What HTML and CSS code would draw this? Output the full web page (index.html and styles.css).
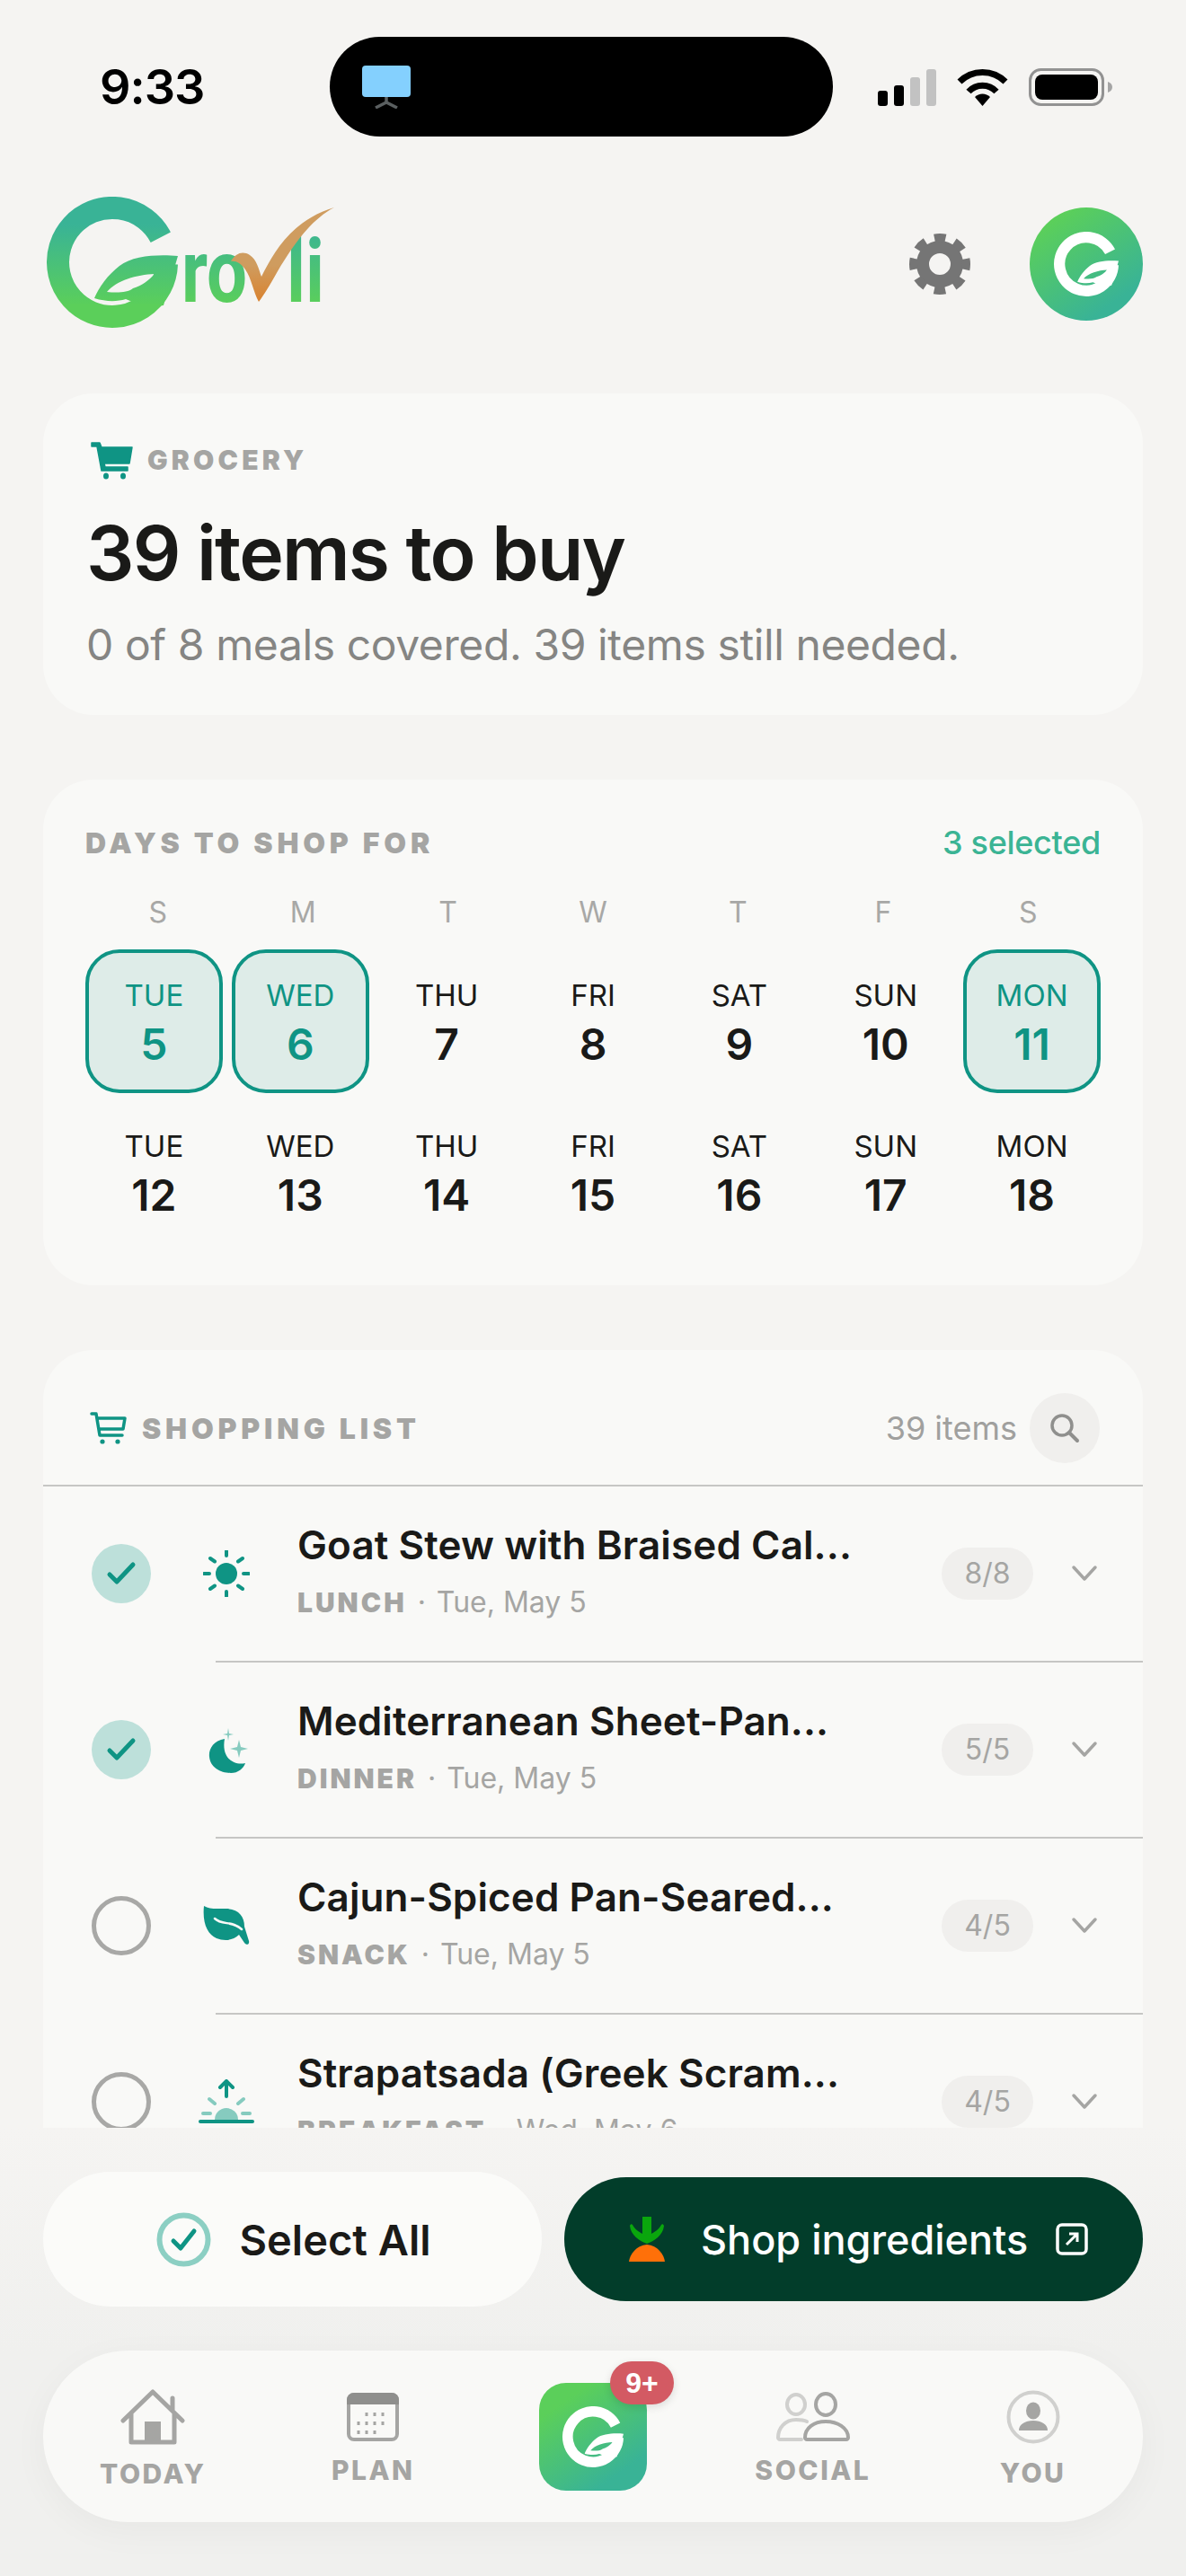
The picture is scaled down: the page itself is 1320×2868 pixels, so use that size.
FILE: index.html
```html
<!DOCTYPE html>
<html lang="en">
<head>
  <meta charset="UTF-8">
  <meta name="viewport" content="width=device-width, initial-scale=1.0">
  <title>Grovli Grocery</title>
  <link rel="stylesheet" href="styles.css">
</head>
<body>

  <svg class="sprites" width="0" height="0">
    <defs>
      <linearGradient id="logo-grad" gradientUnits="userSpaceOnUse" x1="0" y1="60" x2="0" y2="150">
        <stop offset="0" stop-color="#39b396"/>
        <stop offset="1" stop-color="#5bcf5a"/>
      </linearGradient>
      <linearGradient id="check-grad" gradientUnits="userSpaceOnUse" x1="0" y1="105" x2="0" y2="146">
        <stop offset="0" stop-color="#cf9c5f"/>
        <stop offset="1" stop-color="#d9822f"/>
      </linearGradient>
      <symbol id="g-mark" viewBox="22 29 146 146">
        <path fill="none" stroke-width="25" d="M148.800 74.200A60.500 60.500 0 1 0 155.500 104"/>
        <path stroke="none" fill-rule="evenodd" d="M168 95C148 93 118 94 103 106C90 116 80 130 75 142C88 146 100 146 110 143C125 150 140 152 152 150ZM142 115C122 116 100 122 89 135C100 136 112 136 118 131C128 128 136 122 142 115Z"/>
      </symbol>
      <symbol id="cart-line" viewBox="0 0 42 36">
        <path fill="none" stroke="currentColor" stroke-width="3.5" stroke-linecap="round" stroke-linejoin="round" d="M2 2H7L11 26H36M8 7H39L37 19H10"/>
        <circle cx="14" cy="33" r="2.6" fill="currentColor"/>
        <circle cx="31" cy="33" r="2.6" fill="currentColor"/>
      </symbol>
    </defs>
  </svg>

  <div class="screen">

    <header class="status-bar">
      <span class="time">9:33</span>
      <div class="island">
        <svg width="54" height="48" viewBox="0 0 54 48">
          <rect width="54" height="35" rx="4" fill="#84d0fe"/>
          <path d="M27 35V41M15 47L27 41L39 47" fill="none" stroke="#5a5f60" stroke-width="3.5"/>
        </svg>
      </div>
      <div class="status-icons">
        <svg width="65" height="42" viewBox="0 0 65 42">
          <rect x="0" y="25" width="11" height="17" rx="3"/>
          <rect x="18" y="19" width="11" height="23" rx="3"/>
          <rect x="36" y="10" width="11" height="32" rx="3" fill="#c2c2c2"/>
          <rect x="54" y="1" width="11" height="41" rx="3" fill="#c2c2c2"/>
        </svg>
        <svg width="57" height="42" viewBox="0 0 57 42">
          <path d="M3 15A36 36 0 0 1 54 15M13 26A21 21 0 0 1 44 26" fill="none" stroke="#000" stroke-width="7"/>
          <path d="M28.500 42L20 32A12 12 0 0 1 37 32Z"/>
        </svg>
        <svg width="93" height="42" viewBox="0 0 93 42">
          <rect x="1.500" y="1.500" width="81" height="39" rx="12" fill="none" stroke="#929292" stroke-width="3"/>
          <rect x="7" y="7" width="70" height="28" rx="8"/>
          <path d="M88 15C91 16 93 18 93 21S91 26 88 27Z" fill="#a5a5a5"/>
        </svg>
      </div>
    </header>

    <div class="top-bar">
      <svg class="logo" width="360" height="200" viewBox="0 0 360 200">
        <use href="#g-mark" x="22" y="29" width="146" height="146" stroke="url(#logo-grad)" fill="url(#logo-grad)"/>
        <text x="172" y="146" class="logo-text" fill="url(#logo-grad)" textLength="73" lengthAdjust="spacingAndGlyphs">ro</text>
        <text x="289" y="146" class="logo-text" fill="url(#logo-grad)" textLength="42" lengthAdjust="spacingAndGlyphs">li</text>
        <path d="M227 101C232 92 240 89 248 94C256 99 258 110 261 118C275 90 295 55 342 41C315 55 295 85 279 112C270 128 264 138 258 146C252 135 250 120 243 110C238 103 232 100 227 101Z" fill="url(#check-grad)"/>
      </svg>
      <div class="top-actions">
        <svg class="gear" width="68" height="68" viewBox="0 0 68 68">
          <circle cx="34" cy="34" r="19" fill="none" stroke="#757575" stroke-width="14"/>
          <circle cx="34" cy="34" r="29.500" fill="none" stroke="#757575" stroke-width="9" stroke-dasharray="12.500 10.670" stroke-dashoffset="6.250"/>
        </svg>
        <div class="avatar">
          <svg width="72" height="72"><use href="#g-mark" stroke="#fff" fill="#fff"/></svg>
        </div>
      </div>
    </div>

    <main class="scroll">

      <section class="card summary">
        <div class="eyebrow">
          <svg width="48" height="44" viewBox="0 0 48 44">
            <path d="M2 3H11L13 8H47L44 26H16L17 30H42V34H13L8 7H2Z" fill="#0f9484" stroke="#0f9484" stroke-width="1.500" stroke-linejoin="round"/>
            <ellipse cx="18" cy="40" rx="3" ry="3.500" fill="#0f9484"/>
            <ellipse cx="37" cy="40" rx="3" ry="3.500" fill="#0f9484"/>
          </svg>
          <span class="label">GROCERY</span>
        </div>
        <h1>39 items to buy</h1>
        <p class="summary-text">0 of 8 meals covered. 39 items still needed.</p>
      </section>

      <section class="card days">
        <div class="days-head">
          <span class="label wide">DAYS TO SHOP FOR</span>
          <span class="selected-count">3 selected</span>
        </div>
        <div class="weekdays">
          <span>S</span><span>M</span><span>T</span><span>W</span><span>T</span><span>F</span><span>S</span>
        </div>
        <div class="day-grid">
          <div class="day active"><span>TUE</span><strong>5</strong></div>
          <div class="day active"><span>WED</span><strong>6</strong></div>
          <div class="day"><span>THU</span><strong>7</strong></div>
          <div class="day"><span>FRI</span><strong>8</strong></div>
          <div class="day"><span>SAT</span><strong>9</strong></div>
          <div class="day"><span>SUN</span><strong>10</strong></div>
          <div class="day active"><span>MON</span><strong>11</strong></div>
          <div class="day"><span>TUE</span><strong>12</strong></div>
          <div class="day"><span>WED</span><strong>13</strong></div>
          <div class="day"><span>THU</span><strong>14</strong></div>
          <div class="day"><span>FRI</span><strong>15</strong></div>
          <div class="day"><span>SAT</span><strong>16</strong></div>
          <div class="day"><span>SUN</span><strong>17</strong></div>
          <div class="day"><span>MON</span><strong>18</strong></div>
        </div>
      </section>

      <section class="card list">
        <div class="list-head">
          <svg class="list-cart" width="42" height="36"><use href="#cart-line"/></svg>
          <span class="label wide">SHOPPING LIST</span>
          <span class="list-count">39 items</span>
          <div class="search-btn">
            <svg width="36" height="36" viewBox="0 0 36 36">
              <circle cx="15" cy="15" r="11" fill="none" stroke="#8f8f8d" stroke-width="3.500"/>
              <path d="M23 23L32 32" stroke="#8f8f8d" stroke-width="4" stroke-linecap="round"/>
            </svg>
          </div>
        </div>

        <div class="item">
          <div class="check done">
            <svg width="34" height="28" viewBox="0 0 34 28"><path d="M4 15L12 23L30 4" fill="none" stroke="#0f9484" stroke-width="5" stroke-linecap="round" stroke-linejoin="round"/></svg>
          </div>
          <div class="meal-icon">
            <svg width="52" height="52" viewBox="0 0 52 52">
              <circle cx="26" cy="26" r="12" fill="#0f9484"/>
              <path d="M26 1V6M26 46V51M1 26H7M45 26H51M8 9L13 12.500M44 9L39 12.500M8 43L13 39.500M44 43L39 39.500" stroke="#0f9484" stroke-width="4" stroke-linecap="round"/>
            </svg>
          </div>
          <div class="item-text">
            <div class="item-title">Goat Stew with Braised Cal...</div>
            <div class="item-sub"><span class="meal">LUNCH</span><span class="dot">·</span>Tue, May 5</div>
          </div>
          <span class="pill">8/8</span>
          <svg class="chevron" width="30" height="20" viewBox="0 0 30 20"><path d="M3 3L15 16L27 3" fill="none" stroke="#a5a5a3" stroke-width="3.500" stroke-linecap="round" stroke-linejoin="round"/></svg>
        </div>
        <div class="divider"></div>

        <div class="item">
          <div class="check done">
            <svg width="34" height="28" viewBox="0 0 34 28"><path d="M4 15L12 23L30 4" fill="none" stroke="#0f9484" stroke-width="5" stroke-linecap="round" stroke-linejoin="round"/></svg>
          </div>
          <div class="meal-icon">
            <svg width="60" height="56" viewBox="-5 0 60 56">
              <path d="M23 16C10 18 5 28 6 36C7 48 19 54 30 54C38 54 44 49 46 43C34 46 19 38 23 16Z" fill="#0f9484"/>
              <path d="M39 17L41 25L49 27L41 29L39 37L37 29L29 27L37 25ZM27 4L28 10L33 11L28 12L27 18L26 12L21 11L26 10Z" fill="#86cbbf"/>
            </svg>
          </div>
          <div class="item-text">
            <div class="item-title">Mediterranean Sheet-Pan...</div>
            <div class="item-sub"><span class="meal">DINNER</span><span class="dot">·</span>Tue, May 5</div>
          </div>
          <span class="pill">5/5</span>
          <svg class="chevron" width="30" height="20" viewBox="0 0 30 20"><path d="M3 3L15 16L27 3" fill="none" stroke="#a5a5a3" stroke-width="3.500" stroke-linecap="round" stroke-linejoin="round"/></svg>
        </div>
        <div class="divider"></div>

        <div class="item">
          <div class="check"></div>
          <div class="meal-icon">
            <svg width="54" height="46" viewBox="0 0 54 46">
              <path d="M2 1C8 5 16 4 26 4C40 4 47 12 47 24L52 40C53 44 49 45 47 42L41 33C34 40 24 40 16 37C6 33 0 20 2 1Z" fill="#0f9484"/>
              <path d="M14 15C22 23 34 17 44 27" fill="none" stroke="#f9f9f7" stroke-width="2.500" stroke-linecap="round"/>
            </svg>
          </div>
          <div class="item-text">
            <div class="item-title">Cajun-Spiced Pan-Seared...</div>
            <div class="item-sub"><span class="meal">SNACK</span><span class="dot">·</span>Tue, May 5</div>
          </div>
          <span class="pill">4/5</span>
          <svg class="chevron" width="30" height="20" viewBox="0 0 30 20"><path d="M3 3L15 16L27 3" fill="none" stroke="#a5a5a3" stroke-width="3.500" stroke-linecap="round" stroke-linejoin="round"/></svg>
        </div>
        <div class="divider"></div>

        <div class="item">
          <div class="check"></div>
          <div class="meal-icon">
            <svg width="62" height="50" viewBox="0 0 62 50">
              <path d="M31 19V3M24 9L31 2L38 9" fill="none" stroke="#0f9484" stroke-width="4" stroke-linecap="round" stroke-linejoin="round"/>
              <path d="M18 45A13 13 0 0 1 44 45Z" fill="#86cbbf"/>
              <path d="M5 38H13M49 38H57M12 22L18 27M50 22L44 27" stroke="#86cbbf" stroke-width="4" stroke-linecap="round"/>
              <path d="M2 47H60" stroke="#0f9484" stroke-width="4" stroke-linecap="round"/>
            </svg>
          </div>
          <div class="item-text">
            <div class="item-title">Strapatsada (Greek Scram...</div>
            <div class="item-sub"><span class="meal">BREAKFAST</span><span class="dot">·</span>Wed, May 6</div>
          </div>
          <span class="pill">4/5</span>
          <svg class="chevron" width="30" height="20" viewBox="0 0 30 20"><path d="M3 3L15 16L27 3" fill="none" stroke="#a5a5a3" stroke-width="3.500" stroke-linecap="round" stroke-linejoin="round"/></svg>
        </div>
      </section>

    </main>

    <div class="dock">
      <div class="actions">
        <button class="btn-select">
          <svg width="61" height="61" viewBox="0 0 61 61">
            <circle cx="30.500" cy="30.500" r="27" fill="none" stroke="#8ccfc3" stroke-width="6"/>
            <path d="M19 32L27 40L42 21" fill="none" stroke="#0f9484" stroke-width="5" stroke-linecap="round" stroke-linejoin="round"/>
          </svg>
          Select All
        </button>
        <button class="btn-shop">
          <svg width="40" height="50" viewBox="0 0 40 50">
            <path d="M20 0V16M20 30C12 27 2 21 1 10C2 8 3 8 4 9C7 15 12 17 15 19V0H25V19C28 17 33 15 36 9C37 8 38 8 39 10C38 21 28 27 20 30Z" fill="#0aa60d"/>
            <path d="M0 50C1 42 8 32 20 31C32 32 39 42 40 50Z" fill="#ff7009"/>
          </svg>
          <span>Shop ingredients</span>
          <svg width="36" height="36" viewBox="0 0 36 36">
            <rect x="2" y="2" width="32" height="32" rx="5" fill="none" stroke="#fff" stroke-width="3.500"/>
            <path d="M12 24L24 12M15 12H24V21" fill="none" stroke="#fff" stroke-width="3"/>
          </svg>
        </button>
      </div>

      <nav class="tab-bar">
        <div class="tab">
          <svg width="72" height="62" viewBox="0 0 72 62">
            <path d="M3 35L36 3L69 35M12 27V59H60V27M58 10V23" fill="none" stroke="#a5a5a3" stroke-width="5" stroke-linecap="round" stroke-linejoin="round"/>
            <rect x="27" y="36" width="18" height="24" fill="#a5a5a3"/>
          </svg>
          <span class="tab-label">TODAY</span>
        </div>
        <div class="tab">
          <svg width="58" height="54" viewBox="0 0 58 54">
            <rect x="2" y="2" width="54" height="50" rx="6" fill="none" stroke="#a5a5a3" stroke-width="4"/>
            <path d="M8 0H50A8 8 0 0 1 58 8V13H0V8A8 8 0 0 1 8 0Z" fill="#8f8f8d"/>
            <path d="M22 22V26M31 22V26M40 22V26M13 32V36M22 32V36M31 32V36M40 32V36M13 42V46M22 42V46M31 42V46" stroke="#a5a5a3" stroke-width="3"/>
          </svg>
          <span class="tab-label">PLAN</span>
        </div>
        <div class="tab-center">
          <div class="center-btn">
            <svg width="68" height="68"><use href="#g-mark" stroke="#fff" fill="#fff"/></svg>
            <span class="badge">9+</span>
          </div>
        </div>
        <div class="tab">
          <svg width="82" height="55" viewBox="0 0 82 55">
            <ellipse cx="22" cy="14" rx="10" ry="11" fill="none" stroke="#d0d0ce" stroke-width="4"/>
            <path d="M34 33C30 31 26 31 22 31C10 31 2 40 2 51C2 52 3 53 4 53H28" fill="none" stroke="#d0d0ce" stroke-width="4" stroke-linecap="round"/>
            <ellipse cx="55" cy="14" rx="11" ry="12" fill="none" stroke="#a5a5a3" stroke-width="4"/>
            <path d="M32 51C32 40 42 33 55 33C68 33 80 40 80 51C80 52 79 53 78 53H34C33 53 32 52 32 51Z" fill="none" stroke="#a5a5a3" stroke-width="4"/>
          </svg>
          <span class="tab-label">SOCIAL</span>
        </div>
        <div class="tab">
          <svg width="60" height="60" viewBox="0 0 60 60">
            <circle cx="30" cy="30" r="27.500" fill="none" stroke="#d0d0ce" stroke-width="4"/>
            <ellipse cx="30" cy="23" rx="8" ry="9.500" fill="#a5a5a3"/>
            <path d="M14 45C14 38 21 34 30 34C39 34 46 38 46 45Z" fill="#a5a5a3"/>
          </svg>
          <span class="tab-label">YOU</span>
        </div>
      </nav>
    </div>

  </div>

</body>
</html>
```

FILE: styles.css
```css
* {
  box-sizing: border-box;
}
html, body {
  margin: 0;
  padding: 0;
}
body {
  font-family: Inter, "Noto Sans", sans-serif;
  background-color: #f5f4f2;
  color: #1a1a18;
}
.sprites {
  position: absolute;
}
.screen {
  width: 1320px;
  height: 2868px;
  display: flex;
  flex-direction: column;
  overflow: hidden;
}

/* status bar */
.status-bar {
  display: flex;
  align-items: center;
  height: 152px;
  padding: 41px 0 0 111px;
}
.time {
  width: 256px;
  font-size: 54px;
  font-weight: 600;
  letter-spacing: -1px;
  color: #000;
}
.island {
  width: 560px;
  height: 111px;
  padding: 32px 0 0 36px;
  border-radius: 56px;
  background-color: #000;
}
.status-icons {
  display: flex;
  align-items: center;
  gap: 23px;
  margin-left: 50px;
}

/* logo row */
.top-bar {
  display: flex;
  justify-content: space-between;
  height: 286px;
  padding: 38px 48px 0 30px;
}
.logo-text {
  font-family: Roboto, sans-serif;
  font-size: 98px;
  font-weight: 700;
}
.top-actions {
  display: flex;
  align-items: center;
  gap: 66px;
  height: 126px;
  margin-top: 41px;
}
.avatar {
  display: flex;
  align-items: center;
  justify-content: center;
  width: 126px;
  height: 126px;
  border-radius: 50%;
  background: linear-gradient(145deg, #5bcf5a 15%, #39b396 80%);
}

/* cards */
.scroll {
  display: flex;
  flex-direction: column;
  gap: 72px;
  height: 1931px;
  padding: 0 48px;
  overflow: hidden;
  flex-shrink: 0;
}
.card {
  border-radius: 56px;
  background-color: #f9f9f7;
  flex-shrink: 0;
}
.label {
  font-size: 30px;
  font-weight: 900;
  letter-spacing: 4.200px;
  color: #a5a5a3;
}
.label.wide {
  font-size: 32px;
  letter-spacing: 4.800px;
}
.summary {
  height: 358px;
  padding: 52px 48px 0;
}
.eyebrow {
  display: flex;
  align-items: center;
  gap: 16px;
  height: 44px;
  margin-left: 4px;
}
h1 {
  margin: 32px 0 0;
  font-size: 84px;
  line-height: 100px;
  font-weight: 600;
  letter-spacing: -1.800px;
}
.summary-text {
  margin: 22px 0 0;
  font-size: 48px;
  line-height: 60px;
  font-weight: 400;
  letter-spacing: -0.400px;
  color: #858583;
}

/* days picker */
.days {
  height: 563px;
  padding: 54px 47px 0;
}
.days-head {
  display: flex;
  justify-content: space-between;
  align-items: center;
  height: 32px;
}
.selected-count {
  font-size: 36px;
  font-weight: 500;
  letter-spacing: -0.300px;
  color: #3bb494;
}
.weekdays {
  display: grid;
  grid-template-columns: repeat(7, 1fr);
  margin-top: 42px;
  margin-bottom: 21px;
  font-size: 32px;
  line-height: 40px;
  text-align: center;
  color: #a8a8a6;
}
.day-grid {
  display: grid;
  grid-template-columns: repeat(7, 1fr);
  grid-auto-rows: 160px;
  gap: 8px 10px;
}
.day {
  display: flex;
  flex-direction: column;
  align-items: center;
  padding-top: 27px;
  border: 4px solid transparent;
  border-radius: 38px;
}
.day span {
  font-size: 33px;
  line-height: 40px;
}
.day strong {
  margin-top: 7px;
  font-size: 48px;
  line-height: 56px;
  font-weight: 600;
}
.day.active {
  border-color: #0f9484;
  background-color: #deece8;
  color: #0f9484;
}

/* shopping list */
.list {
  border-radius: 56px 56px 0 0;
}
.list-head {
  display: flex;
  align-items: center;
  height: 152px;
  padding: 24px 48px 0 52px;
  border-bottom: 2px solid #c6c6c4;
}
.list-cart {
  color: #0f9484;
  margin-right: 16px;
}
.list-count {
  margin-left: auto;
  margin-right: 14px;
  font-size: 36px;
  color: #a0a09e;
}
.search-btn {
  display: flex;
  align-items: center;
  justify-content: center;
  width: 78px;
  height: 78px;
  border-radius: 50%;
  background-color: #f0efed;
}
.item {
  display: flex;
  align-items: center;
  height: 194px;
  padding: 0 50px 0 54px;
}
.divider {
  height: 2px;
  margin-left: 192px;
  background-color: #c6c6c4;
}
.check {
  display: flex;
  align-items: center;
  justify-content: center;
  width: 66px;
  height: 66px;
  border: 5px solid #a8a8a6;
  border-radius: 50%;
  flex-shrink: 0;
}
.check.done {
  border: none;
  background-color: #bde0da;
}
.meal-icon {
  display: flex;
  align-items: center;
  justify-content: center;
  width: 62px;
  margin: 0 48px 0 53px;
  flex-shrink: 0;
}
.item-text {
  flex: 1;
  padding-bottom: 7px;
}
.item-title {
  font-size: 44px;
  line-height: 52px;
  font-weight: 600;
  letter-spacing: 0.100px;
}
.item-sub {
  margin-top: 18px;
  font-size: 32px;
  line-height: 40px;
  color: #a5a5a3;
}
.meal {
  font-size: 30px;
  font-weight: 900;
  letter-spacing: 3px;
}
.dot {
  margin: 0 12px;
}
.pill {
  width: 102px;
  height: 58px;
  margin-right: 42px;
  border-radius: 29px;
  background-color: #f0efed;
  font-size: 32px;
  line-height: 58px;
  text-align: center;
  color: #a5a5a3;
}

/* bottom dock */
.dock {
  flex: 1;
  padding: 49px 48px 0;
  background: linear-gradient(#f5f4f2, #f0f0ee 50%);
}
.actions {
  display: flex;
  align-items: center;
  gap: 25px;
}
.btn-select, .btn-shop {
  display: flex;
  align-items: center;
  border: none;
  font-family: inherit;
  font-weight: 600;
}
.btn-select {
  justify-content: center;
  gap: 31px;
  width: 555px;
  height: 150px;
  padding-left: 9px;
  border-radius: 75px;
  background-color: #fbfbf9;
  font-size: 47px;
  color: #1a1a18;
}
.btn-shop {
  gap: 40px;
  width: 644px;
  height: 138px;
  padding-left: 72px;
  border-radius: 69px;
  background-color: #023d2a;
  font-size: 45px;
  font-weight: 500;
  color: #fff;
}
.btn-shop span {
  margin-right: -9px;
}
.tab-bar {
  display: grid;
  grid-template-columns: repeat(5, 1fr);
  height: 191px;
  margin-top: 49px;
  border-radius: 95px;
  background-color: #f9f9f7;
  box-shadow: 0 10px 40px rgba(0, 0, 0, 0.04);
}
.tab, .tab-center {
  display: flex;
  flex-direction: column;
  align-items: center;
  justify-content: center;
  gap: 20px;
}
.tab-label {
  font-size: 30px;
  line-height: 24px;
  font-weight: 800;
  letter-spacing: 2.500px;
  color: #a5a5a3;
}
.center-btn {
  position: relative;
  display: flex;
  align-items: center;
  justify-content: center;
  width: 120px;
  height: 120px;
  border-radius: 30px;
  background: linear-gradient(145deg, #5bcf5a 20%, #39b396 80%);
}
.badge {
  position: absolute;
  top: -24px;
  left: 79px;
  width: 71px;
  height: 48px;
  border-radius: 24px;
  background-color: #d35a63;
  box-shadow: 0 3px 10px rgba(0, 0, 0, 0.12);
  font-family: "Liberation Sans", sans-serif;
  font-size: 32px;
  line-height: 48px;
  font-weight: 700;
  text-align: center;
  color: #fff;
}
```
